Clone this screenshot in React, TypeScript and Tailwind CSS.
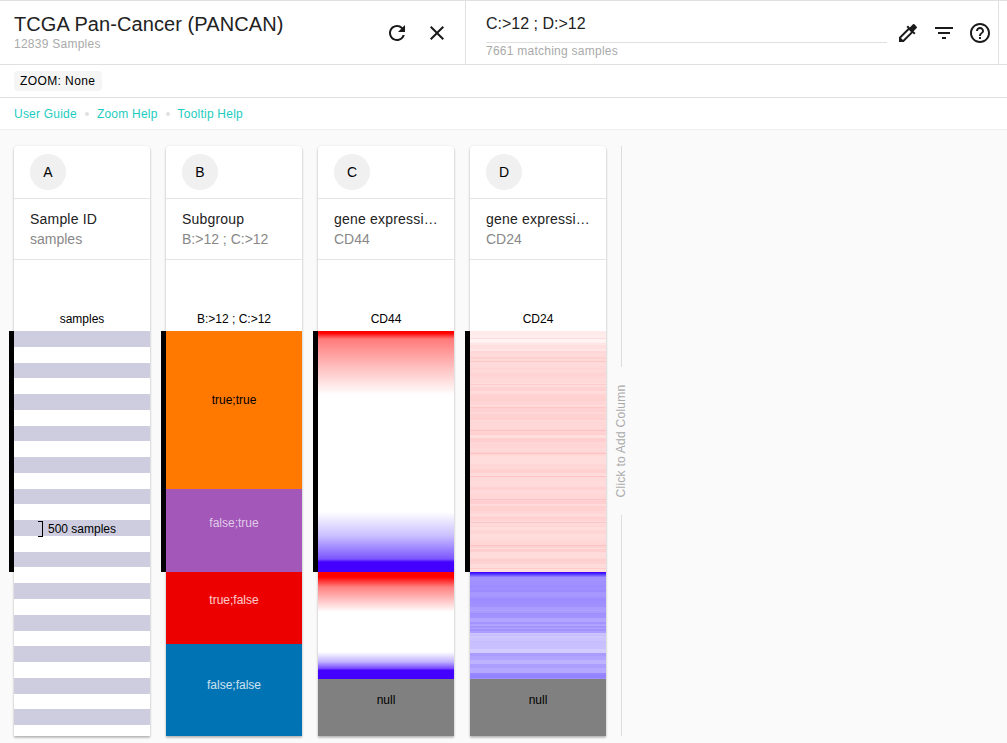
import { MdClose, MdColorize, MdFilterList, MdHelpOutline, MdRefresh } from "react-icons/md"

const SANS = "font-['Liberation_Sans',Arial,sans-serif]"

// small seeded generator so the heat map stripes stay the same on each render
const makeRandom = (seed: number) => () => {
  seed = (seed * 16807) % 2147483647
  return seed / 2147483647
}

// noise held for a few rows, so the stripes come out as soft bands and not hairlines
const makeBands = (rows: number, seed: number, spread: number) => {
  const random = makeRandom(seed)
  const out: number[] = []
  while (out.length < rows) {
    const run = 1 + Math.floor(random() * 4)
    const value = (random() - 0.5) * spread
    for (let r = 0; r < run; r++) out.push(value)
  }
  return out.slice(0, rows)
}

const samples = Array.from({ length: 26 }, (_, i) => i)

const redNoise = makeBands(241, 4711, 0.06)
const cd24Red = redNoise.map((noise, i) => {
  const base = i < 14 ? 0.07 : i < 20 ? 0.1 : 0.16
  const alpha = Math.max(0.03, base + noise + (i % 23 === 7 ? 0.07 : 0))
  return `rgba(255,0,0,${alpha.toFixed(3)})`
})

const blueProfile = (i: number) => {
  if (i < 4) return 0.95 - i * 0.12
  if (i < 60) return 0.5 - (i / 60) * 0.08
  if (i < 80) return 0.27
  if (i < 100) return 0.38
  return 0.52
}
const blueNoise = makeBands(106, 90210, 0.1)
const cd24Blue = blueNoise.map((noise, i) => {
  const alpha = blueProfile(i) + (i < 4 ? 0 : noise)
  return `rgba(56,24,255,${alpha.toFixed(3)})`
})

const CardHead = ({ letter, title, sub, label }: { letter: string; title: string; sub: string; label: string }) => (
  <>
    <div className="h-[53px] px-4 flex items-center border-b border-[#e4e4e4]">
      <div className="w-9 h-9 rounded-full bg-[#f0f0f0] flex items-center justify-center text-sm text-black">{letter}</div>
    </div>
    <div className="h-[61px] px-4 pt-[10px] border-b border-[#e4e4e4]">
      <div className="text-sm leading-[20px] tracking-[0.2px] text-[#222] whitespace-nowrap">{title}</div>
      <div className="text-sm leading-[20px] text-[#888] whitespace-nowrap">{sub}</div>
    </div>
    <div className="h-[71px] flex items-end justify-center pb-[5px] text-xs leading-[14px] text-black">{label}</div>
  </>
)

const Card = ({ letter, title, sub, label, children }: {
  letter: string; title: string; sub: string; label: string; children: React.ReactNode
}) => (
  <div className="w-[136px] shrink-0 bg-white rounded-t-sm shadow-[0_1px_3px_rgba(0,0,0,0.2),0_2px_2px_rgba(0,0,0,0.14)] flex flex-col">
    <CardHead letter={letter} title={title} sub={sub} label={label} />
    <div className="relative h-[405px] flex flex-col">
      <div className="absolute -left-[5px] top-0 w-[5px] h-[241px] bg-black" />
      {children}
    </div>
  </div>
)

const Segment = ({ h, bg, text, children }: { h: string; bg: string; text: string; children: string }) => (
  <div className={`${h} ${bg} ${text} flex items-center justify-center text-xs`}>{children}</div>
)

const App = () => {
  return (
    <div className={`${SANS} w-[1007px] h-[743px] overflow-hidden bg-[#fafafa] flex flex-col`}>
      <header className="h-[65px] shrink-0 bg-white flex border-t border-b border-[#e0e0e0]">
        <div className="w-[466px] shrink-0 border-r border-[#e0e0e0] pl-[14px] pr-4 flex items-center justify-between">
          <div className="-mt-[2px]">
            <h1 className="text-[20px] leading-[24px] tracking-[0.08px] text-[#222] font-normal">TCGA Pan-Cancer (PANCAN)</h1>
            <p className="text-xs leading-[14px] tracking-[0.25px] text-[#aaa] mt-[1px]">12839 Samples</p>
          </div>
          <div className="flex items-center gap-4 text-[#1a1a1a]">
            <MdRefresh size={24} />
            <MdClose size={24} />
          </div>
        </div>
        <div className="w-[533px] shrink-0 border-r border-[#e0e0e0] pl-5 flex items-center">
          <div className="w-[401px]">
            <div className="text-base leading-[20px] text-[#222] pt-[6px] pb-[8px] border-b border-[#e0e0e0]">C:&gt;12 ; D:&gt;12</div>
            <div className="text-xs leading-[14px] tracking-[0.25px] mt-[1px] text-[#aaa]">7661 matching samples</div>
          </div>
          <div className="flex items-center gap-3 ml-[9px] text-[#1a1a1a]">
            <MdColorize size={24} />
            <MdFilterList size={24} />
            <MdHelpOutline size={24} />
          </div>
        </div>
      </header>

      <div className="h-[33px] shrink-0 bg-white border-b border-[#e0e0e0] px-[14px] flex items-center">
        <span className="h-5 w-[88px] pl-[6px] rounded-sm bg-[#f5f5f5] text-xs leading-[20px] tracking-[0.4px] text-black">ZOOM: None</span>
      </div>

      <nav className="h-[32px] shrink-0 bg-white border-b border-[#eee] px-[14px] flex items-center gap-2 text-xs tracking-[0.22px] text-[#1cccc0]">
        <a>User Guide</a>
        <span className="w-1 h-1 rounded-full bg-[#e0e0e0]" />
        <a>Zoom Help</a>
        <span className="w-1 h-1 rounded-full bg-[#e0e0e0]" />
        <a>Tooltip Help</a>
      </nav>

      <main className="flex gap-4 pl-[14px] pt-4">
        <Card letter="A" title="Sample ID" sub="samples" label="samples">
          <div className="relative h-full flex flex-col">
            <div className="h-full overflow-hidden">
              {samples.map((i) => (
                <div key={i} style={{ height: 15.77 }} className={i % 2 === 0 ? "bg-[#cdcddf]" : "bg-white"} />
              ))}
            </div>
            <div className="absolute left-[24px] top-[190px] flex items-center gap-[5px] text-xs leading-[16px] text-black">
              <span className="w-[5px] h-[16px] border-t border-r border-b border-black" />
              500 samples
            </div>
          </div>
        </Card>

        <Card letter="B" title="Subgroup" sub="B:>12 ; C:>12" label="B:>12 ; C:>12">
          <Segment h="h-[158px] pb-[20px]" bg="bg-[#ff7800]" text="text-black">true;true</Segment>
          <Segment h="h-[83px] pb-[15px]" bg="bg-[#a257b9]" text="text-white/70">false;true</Segment>
          <Segment h="h-[72px] pb-[16px]" bg="bg-[#ec0000]" text="text-white/80">true;false</Segment>
          <Segment h="h-[92px] pb-[10px]" bg="bg-[#0073b5]" text="text-white/80">false;false</Segment>
        </Card>

        <Card letter="C" title="gene expressi…" sub="CD44" label="CD44">
          <div className="h-[241px] bg-[linear-gradient(to_bottom,#ff0000_0px,#ff0000_2px,#ff7a7a_8px,#ffb0b0_30px,#ffffff_64px,#ffffff_181px,#c9bfff_205px,#7a55ff_228px,#4400ff_231px,#4400ff_241px)]" />
          <div className="h-[107px] bg-[linear-gradient(to_bottom,#ff0000_0px,#ff0000_5px,#ff8080_15px,#ffffff_40px,#ffffff_80px,#bfb0ff_90px,#7040ff_97px,#4400ff_98px,#4400ff_107px)]" />
          <div className="h-[57px] pb-[15px] bg-[#808080] flex items-center justify-center text-xs text-black">null</div>
        </Card>

        <Card letter="D" title="gene expressi…" sub="CD24" label="CD24">
          <div className="h-[241px] flex flex-col">
            {cd24Red.map((color, i) => (
              <div key={i} className="h-px shrink-0" style={{ backgroundColor: color }} />
            ))}
          </div>
          <div className="h-[1px] bg-[#4400ff]" />
          <div className="h-[106px] flex flex-col">
            {cd24Blue.map((color, i) => (
              <div key={i} className="h-px shrink-0" style={{ backgroundColor: color }} />
            ))}
          </div>
          <div className="h-[57px] pb-[15px] bg-[#808080] flex items-center justify-center text-xs text-black">null</div>
        </Card>

        <div className="w-px -ml-[1px] h-[590px] flex flex-col items-center">
          <div className="flex-1 w-px bg-[#dcdcdc]" />
          <div className="h-[148px] flex items-center justify-center">
            <span className="-rotate-90 whitespace-nowrap text-xs tracking-[0.25px] text-[#aaa]">Click to Add Column</span>
          </div>
          <div className="flex-1 w-px bg-[#dcdcdc]" />
        </div>
      </main>
    </div>
  )
}

export default App
